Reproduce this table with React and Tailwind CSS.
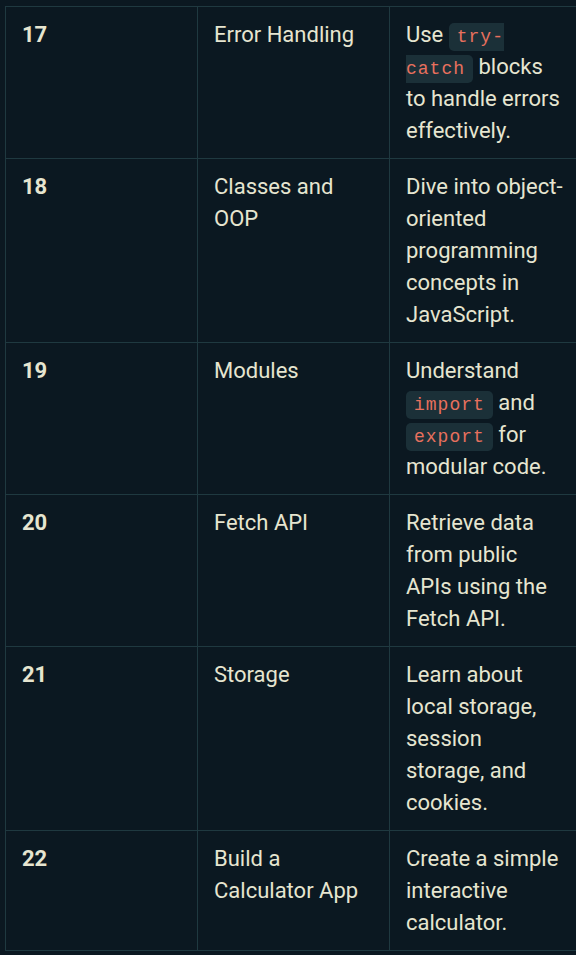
import React from 'react';

const Code = ({ children }) => (
  <code className="bg-[#1b3038] text-[#e8705e] px-[8px] py-[4px] rounded-[5px] text-[18px] leading-[1] tracking-[1px] [font-family:'Liberation_Mono',monospace]">
    {children}
  </code>
);

const rows = [
  { day: '17', topic: 'Error Handling', desc: <>Use <Code>try-catch</Code> blocks to handle errors effectively.</> },
  { day: '18', topic: 'Classes and OOP', desc: 'Dive into object-oriented programming concepts in JavaScript.' },
  { day: '19', topic: 'Modules', desc: <>Understand <Code>import</Code> and <Code>export</Code> for modular code.</> },
  { day: '20', topic: 'Fetch API', desc: 'Retrieve data from public APIs using the Fetch API.' },
  { day: '21', topic: 'Storage', desc: 'Learn about local storage, session storage, and cookies.' },
  { day: '22', topic: 'Build a Calculator App', desc: 'Create a simple interactive calculator.' },
];

const App = () => {
  return (
    <div className="w-[576px] h-[955px] overflow-hidden bg-[#0b1821] text-[#e6e5d0] text-[22px] leading-[32px] [font-family:Roboto,sans-serif]">
      <div className="pt-[6px] pl-[5px]">
        <table className="table-fixed w-[576px] border-collapse">
          <tbody>
            {rows.map((r) => (
              <tr key={r.day} className="border-t border-b border-[#1f3940] align-top">
                <td className="w-[192px] border-l border-r border-[#1f3940] px-4 pt-3 pb-[11px] font-bold">{r.day}</td>
                <td className="w-[192px] border-r border-[#1f3940] px-4 pt-3 pb-[11px]">{r.topic}</td>
                <td className="w-[192px] border-r border-[#1f3940] px-4 pt-3 pb-[11px]">{r.desc}</td>
              </tr>
            ))}
          </tbody>
        </table>
      </div>
    </div>
  );
};

export default App;
